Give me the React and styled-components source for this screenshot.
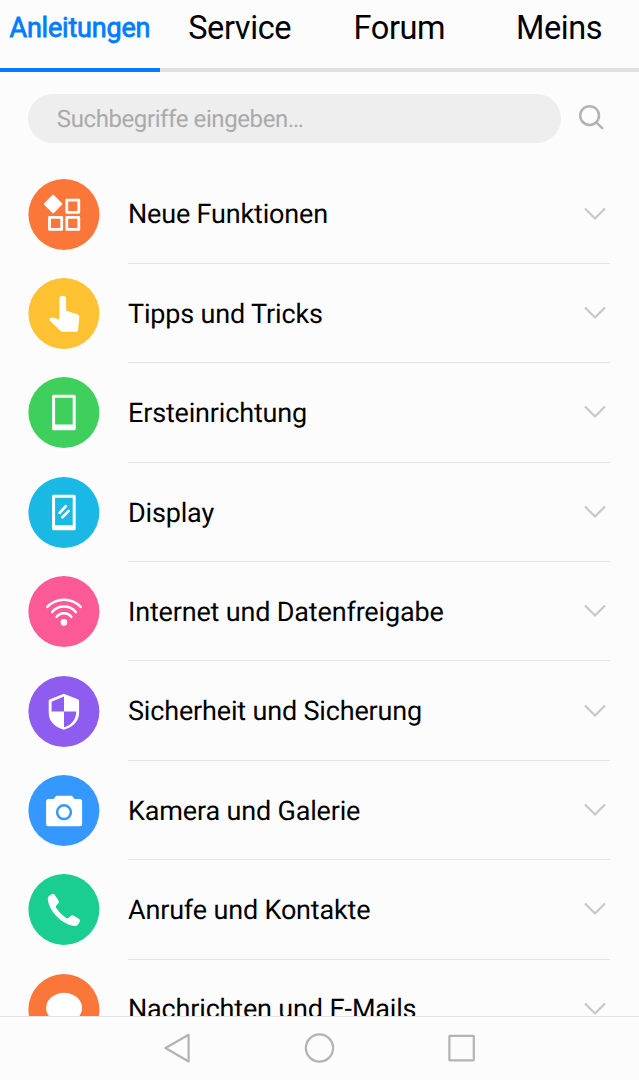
import React, { useState } from 'react';
import styled, { createGlobalStyle } from 'styled-components';

const topics = [
    { title: 'Neue Funktionen', color: '#fb7639', icon: 'grid' },
    { title: 'Tipps und Tricks', color: '#fec132', icon: 'hand' },
    { title: 'Ersteinrichtung', color: '#3fcf5c', icon: 'phone' },
    { title: 'Display', color: '#1ab9e5', icon: 'display' },
    { title: 'Internet und Datenfreigabe', color: '#fc5a96', icon: 'wifi' },
    { title: 'Sicherheit und Sicherung', color: '#8e5cef', icon: 'shield' },
    { title: 'Kamera und Galerie', color: '#3598ff', icon: 'camera' },
    { title: 'Anrufe und Kontakte', color: '#1acd90', icon: 'call' },
    { title: 'Nachrichten und E-Mails', color: '#fb7639', icon: 'message' },
]

const tabs = ['Anleitungen', 'Service', 'Forum', 'Meins']

const icons = {
    grid: (
        <>
            <rect x="17.9" y="18.2" width="13.6" height="13.6" rx="1" fill="#fff" transform="rotate(45 24.7 25)" />
            <g fill="none" stroke="#fff" strokeWidth="2.8" strokeLinejoin="round">
                <rect x="38.4" y="21.1" width="12" height="12.2" />
                <rect x="21.1" y="38.4" width="12.2" height="12" />
                <rect x="38.4" y="38.4" width="12" height="12" />
            </g>
        </>
    ),
    hand: (
        <path
            fill="#fff"
            d="M31 21.2a3.35 3.35 0 0 1 6.7 0v11.5l11.3 3.6q2.1.7 2 2.9l-1.3 12.6q-.2 1.9-2 1.9H34q-1.2 0-2-.9L21.3 42.6q-1.3-1.5.3-2.4 1.6-.9 3.5-.5l5.9 2.1z"
        />
    ),
    phone: (
        <path fill="#fff" fillRule="evenodd" d="M25.2 17.7h20.6q1.5 0 1.5 1.5v32.6q0 1.5-1.5 1.5H25.2q-1.5 0-1.5-1.5V19.2q0-1.5 1.5-1.5zM26.7 20.7v26.9h17.6V20.7z" />
    ),
    display: (
        <>
            <path fill="#fff" fillRule="evenodd" d="M25.2 17.7h20.6q1.5 0 1.5 1.5v32.6q0 1.5-1.5 1.5H25.2q-1.5 0-1.5-1.5V19.2q0-1.5 1.5-1.5zM26.7 20.7v27.5h17.6V20.7z" />
            <path stroke="#fff" strokeWidth="2.7" strokeLinecap="round" d="M31.3 35.8l6.1-6.6M34 40.2l6.3-6.3" />
        </>
    ),
    wifi: (
        <>
            <path
                fill="none"
                stroke="#fff"
                strokeWidth="2.6"
                strokeLinecap="round"
                d="M18.9 30.9a23 23 0 0 1 33.4 0M23.8 36a15.5 15.5 0 0 1 23.6 0M28.3 40.8a9.2 9.2 0 0 1 14.6 0"
            />
            <circle cx="35.5" cy="46.4" r="3.3" fill="#fff" />
        </>
    ),
    shield: (
        <path
            fill="#fff"
            fillRule="evenodd"
            d="M34.3 18.2q1.2-.7 2.4 0l12.7 5q1.3.5 1.3 1.9v11.5c0 9-6.3 14.7-15.2 17.1-8.9-2.4-15.2-8.1-15.2-17.1V25.1q0-1.4 1.3-1.9zM35.6 20.6L23.2 25.8v9.6h12.4zM35.6 35.4v15.8c7-2.1 12.1-7.1 12.3-15.8z"
        />
    ),
    camera: (
        <>
            <path
                fill="#fff"
                d="M28.8 20.7h13.8q.8 0 1.3.6l2.3 2.7h5q2.5 0 2.5 2.5v22.3q0 2.5-2.5 2.5H20.2q-2.5 0-2.5-2.5V26.5q0-2.5 2.5-2.5h5l2.3-2.7q.5-.6 1.3-.6z"
            />
            <circle cx="35.6" cy="37.2" r="6.9" fill="none" stroke="#3598ff" strokeWidth="2.5" />
        </>
    ),
    call: (
        <path
            fill="#fff"
            d="M20.7 21.9l2.9-1.9q1.6-.8 2.7.7l3.9 6.1q.8 1.4-.3 2.6l-2 2c-.7.9-.4 1.700.1 2.600 2.600 4.200 5.700 7.300 9.900 9.900.9.500 1.700.6 2.500-.1l1.900-1.900q1.300-1.200 2.800-.3l5.600 3.400q1.600 1.200.7 2.800l-1.700 2.700q-.8 1.300-2.500 1.400C34.500 51.800 19.700 36.700 19.400 24.500q0-1.700 1.300-2.600z"
        />
    ),
    message: <ellipse cx="35.7" cy="34" rx="18" ry="15.2" fill="#fff" />,
}

const App = () => {
    const [active, setActive] = useState('Anleitungen')

    return (
        <Screen>
            <GlobalStyle />
            <Tabs>
                {tabs.map((tab) => (
                    <Tab key={tab} $active={tab === active} onClick={() => setActive(tab)}>
                        {tab}
                    </Tab>
                ))}
            </Tabs>
            <SearchBar>
                <SearchInput placeholder="Suchbegriffe eingeben…" />
                <SearchButton aria-label="Suchen">
                    <svg width="28" height="28" viewBox="0 0 28 28" fill="none" stroke="#b3b3b3" strokeWidth="2.5" strokeLinecap="round">
                        <circle cx="12.6" cy="11.6" r="9.4" />
                        <path d="M19.5 18.7l5.7 5.5" />
                    </svg>
                </SearchButton>
            </SearchBar>
            <List>
                {topics.map((topic) => (
                    <Row key={topic.title}>
                        <Badge viewBox="-0.4 0 71 71">
                            <circle cx="35.5" cy="35.5" r="35.5" fill={topic.color} />
                            {icons[topic.icon]}
                        </Badge>
                        <RowBody>
                            <RowTitle>{topic.title}</RowTitle>
                            <Chevron viewBox="0 0 24 14">
                                <path d="M2 1.5l10 10 10-10" />
                            </Chevron>
                        </RowBody>
                    </Row>
                ))}
            </List>
            <NavBar>
                <NavButton aria-label="Zurück">
                    <svg viewBox="0 0 32 32">
                        <path d="M3.500 16L26.600 2.800v26.700z" />
                    </svg>
                </NavButton>
                <NavButton aria-label="Start">
                    <svg viewBox="0 0 32 32">
                        <circle cx="15.5" cy="16" r="13.6" />
                    </svg>
                </NavButton>
                <NavButton aria-label="Übersicht">
                    <svg viewBox="0 0 32 32">
                        <rect x="3.4" y="3.9" width="24.4" height="24.4" rx="0.5" />
                    </svg>
                </NavButton>
            </NavBar>
        </Screen>
    );
}

const GlobalStyle = createGlobalStyle`
    body {
        margin: 0;
        background: #fcfcfc;
    }

    * {
        box-sizing: border-box;
    }

    button, input {
        border: 0;
        padding: 0;
        background: none;
        font-family: inherit;
    }
`

const Screen = styled.div`
    display: flex;
    flex-direction: column;
    height: 1080px;
    overflow: hidden;
    background: #fcfcfc;
    color: #000;
    font-family: Roboto, sans-serif;
    text-rendering: geometricPrecision;
`

const Tabs = styled.nav`
    display: flex;
    flex: none;
    height: 72px;
`

const Tab = styled.button`
    flex: 1;
    padding-bottom: 12px;
    border-bottom: 4px solid ${(props) => (props.$active ? '#007dff' : '#e1e1e1')};
    color: ${(props) => (props.$active ? '#007dff' : '#000')};
    font-size: ${(props) => (props.$active ? '27px' : '32.5px')};
    letter-spacing: ${(props) => (props.$active ? '-0.2px' : '-0.4px')};
    -webkit-text-stroke: ${(props) => (props.$active ? '0.8px #007dff' : '0')};
    line-height: 54px;
`

const SearchBar = styled.div`
    display: flex;
    flex: none;
    align-items: center;
    gap: 16px;
    padding: 21.5px 28.3px;
`

const SearchInput = styled.input`
    width: 532.7px;
    height: 49.5px;
    padding: 2px 28.5px 0;
    border-radius: 25px;
    background: #eee;
    font-size: 24px;
    letter-spacing: -0.4px;
    text-rendering: geometricPrecision;
    outline: none;

    &::placeholder {
        color: #aaa;
    }
`

const SearchButton = styled.button`
    display: flex;
`

const List = styled.div`
    flex: 1;
    min-height: 0;
    overflow: hidden;
`

const Row = styled.div`
    display: flex;
    align-items: center;
    height: 99.375px;
    padding: 0 29px 0 28.3px;
`

const Badge = styled.svg`
    flex: none;
    width: 71px;
    height: 71px;
    margin-right: 28.7px;
    overflow: visible;
`

const RowBody = styled.div`
    display: flex;
    flex: 1;
    align-items: center;
    justify-content: space-between;
    height: 100%;
    padding-right: 3.5px;
    border-bottom: 1.5px solid #e4e4e4;
`

const RowTitle = styled.span`
    padding-top: 1.4px;
    font-size: 27px;
    letter-spacing: -0.17px;
    white-space: nowrap;
`

const Chevron = styled.svg`
    width: 24px;
    height: 14px;
    fill: none;
    stroke: #c8c8c8;
    stroke-width: 2.2;
`

const NavBar = styled.footer`
    display: flex;
    flex: none;
    justify-content: center;
    gap: 110px;
    height: 64px;
    padding-top: 15px;
    border-top: 1px solid #e2e2e2;
`

const NavButton = styled.button`
    display: flex;
    width: 32px;
    height: 32px;

    svg {
        width: 32px;
        height: 32px;
        fill: none;
        stroke: #b3b3b3;
        stroke-width: 2.2;
        stroke-linejoin: round;
    }
`

export default App;
